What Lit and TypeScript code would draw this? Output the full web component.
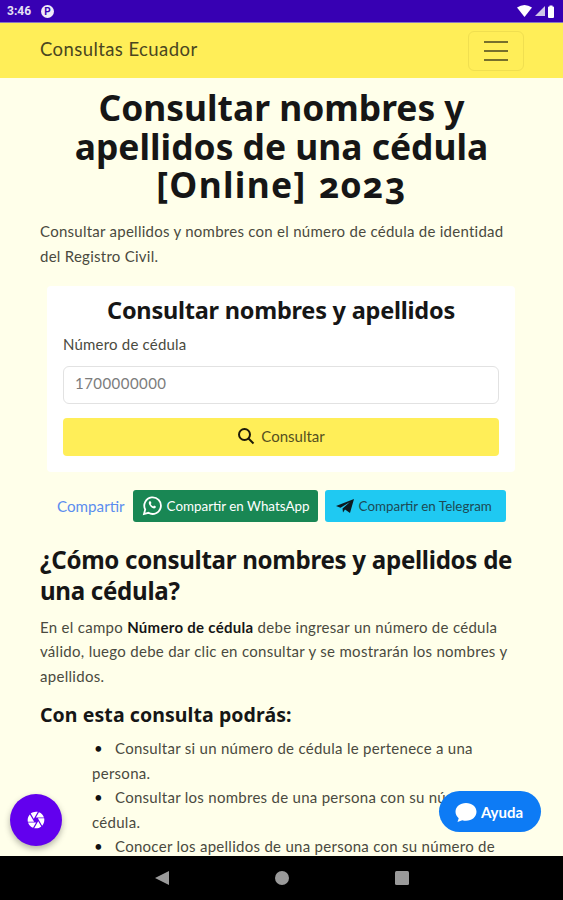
import { LitElement, html, css } from "lit";
import { customElement } from "lit/decorators.js";

@customElement("app-root")
export class AppRoot extends LitElement {
  static styles = css`
    :host { display: block; width: 563px; height: 900px; position: relative; overflow: hidden; background: #ffffea; font-family: "Lato", "Liberation Sans", sans-serif; color: #4a4a40; }
    * { box-sizing: border-box; }
    .page { display: flex; flex-direction: column; height: 900px; }
    .status { height: 22px; background: #3700b3; color: #e6e0f4; display: flex; align-items: center; padding: 0 8px 0 7px; font: 700 12px "Roboto", sans-serif; flex: none; }
    .status .pin { width: 13px; height: 13px; border-radius: 50%; background: #efeaf8; color: #3700b3; font: 700 10px/13px "Roboto", sans-serif; text-align: center; margin-left: 10px; }
    .status .right { margin-left: auto; display: flex; gap: 2px; align-items: center; }
    .nav { height: 56px; border-top: 1px solid #8a78c0; background: #ffee58; display: flex; align-items: center; justify-content: space-between; padding: 0 39px 0 40px; flex: none; }
    .brand { font-size: 18.5px; color: #4a4620; letter-spacing: .42px; margin-top: -4px; }
    .toggler { width: 56px; height: 40px; border: 1px solid #f0df50; border-radius: 6px; display: flex; flex-direction: column; justify-content: center; gap: 7px; align-items: center; }
    .toggler i { display: block; width: 24px; height: 2px; background: #77702c; }
    .main { flex: 1; min-height: 0; overflow: hidden; padding: 10px 40px 0; }
    h1 { margin: 0 -10px; text-align: center; font: 700 35.4px/38.5px "Noto Sans", sans-serif; color: #161616; font-variant-numeric: oldstyle-nums; }
    h1 span { letter-spacing: 1.3px; word-spacing: 2px; }
    .lead { margin: 15px 0 0; font-size: 15px; line-height: 25px; letter-spacing: .26px; }
    .card { margin: 17px 8px 0 7px; background: #fff; border-radius: 4px; padding: 7px 16px 16px; height: 186px; }
    .card h2 { margin: 0; text-align: center; font: 700 23.5px/34px "Noto Sans", sans-serif; color: #161616; letter-spacing: -0.23px; }
    .label { font-size: 15px; line-height: 22px; margin-top: 6px; letter-spacing: .2px; }
    .input { margin-top: 11px; height: 38px; border: 1px solid #e2e2e2; border-radius: 6px; padding: 0 11px 3px; display: flex; align-items: center; font-size: 15px; color: #7c7c7c; background: #fff; letter-spacing: .45px; }
    .btn { margin-top: 14px; height: 38px; background: #ffee58; border-radius: 4px; padding-bottom: 2px; display: flex; align-items: center; justify-content: center; gap: 6px; font-size: 15px; color: #55501f; }
    .share { display: flex; align-items: center; margin: 18px 0 0 17px; height: 32px; }
    .share .t { color: #5b8def; font-size: 15.2px; margin-right: 8px; }
    .sb { height: 32px; border-radius: 3px; display: flex; align-items: center; font-size: 13.4px; }
    .wa { width: 185px; background: #198754; color: #fff; padding-left: 9px; gap: 4px; margin-right: 7px; }
    .tg { width: 181px; background: #1fc9f2; color: #1d4a55; padding-left: 11px; gap: 5px; }
    h3 { margin: 22px 0 0; font: 700 24.1px/31px "Noto Sans", sans-serif; color: #161616; letter-spacing: -0.29px; }
    .para { margin: 9px 0 0; font-size: 15px; line-height: 24.5px; letter-spacing: .29px; }
    .para b { color: #161616; font-weight: 700; }
    h4 { margin: 13px 0 0; font: 700 19.5px/28px "Noto Sans", sans-serif; color: #161616; letter-spacing: .08px; }
    ul { list-style: none; margin: 7px 0 0; padding: 0 0 0 52px; font-size: 15px; line-height: 24.5px; letter-spacing: .28px; }
    li::before { content: "•"; color: #111; display: inline-block; width: 21px; padding-left: 2px; font-size: 15px; line-height: 10px; }
    .bottom { height: 44px; background: #000; flex: none; display: flex; align-items: center; justify-content: center; gap: 104px; }
    .fab { position: absolute; left: 10px; top: 794px; width: 52px; height: 52px; border-radius: 50%; background: #6200ee; box-shadow: 0 3px 6px rgba(0,0,0,.3); display: flex; align-items: center; justify-content: center; }
    .help { position: absolute; left: 439px; top: 791px; width: 102px; height: 41px; border-radius: 21px; background: #0d7bf5; color: #fff; display: flex; align-items: center; justify-content: center; gap: 2px; font: 700 15px "Lato", sans-serif; padding-right: 4px; }
  `;

  render() {
    return html`<div class="page">
      <div class="status">3:46<span class="pin">P</span>
        <span class="right">
          <svg width="15" height="12" viewBox="0 0 15 12"><path d="M0 2.5Q7.5-2.5 15 2.5L7.5 12Z" fill="#fff"/></svg>
          <svg width="11" height="12" viewBox="0 0 11 12"><path d="M11 1V11H1Z" fill="#cfc6e8"/></svg>
          <svg width="8" height="13" viewBox="0 0 8 13"><path d="M1 2.5Q1 1.5 2 1.5H2.5V.5H5.5V1.5H6Q7 1.5 7 2.5V12Q7 13 6 13H2Q1 13 1 12Z" fill="#fff"/></svg>
        </span>
      </div>
      <div class="nav"><span class="brand">Consultas Ecuador</span><span class="toggler"><i></i><i></i><i></i></span></div>
      <div class="main">
        <h1>Consultar nombres y apellidos de una cédula <span>[Online] 2023</span></h1>
        <p class="lead">Consultar apellidos y nombres con el número de cédula de identidad del Registro Civil.</p>
        <div class="card">
          <h2>Consultar nombres y apellidos</h2>
          <div class="label">Número de cédula</div>
          <div class="input">1700000000</div>
          <div class="btn"><svg width="18" height="18" viewBox="0 0 18 18" fill="none" stroke="#1c1a08" stroke-width="2"><circle cx="7.5" cy="7.5" r="5.5"/><path d="M11.5 11.5L16.5 16.5"/></svg>Consultar</div>
        </div>
        <div class="share"><span class="t">Compartir</span>
          <span class="sb wa"><svg width="21" height="21" viewBox="0 0 21 21" fill="none" stroke="#fff" stroke-width="1.8"><path d="M2 19l1.2-4.6A8.3 8.3 0 1 1 6.4 17.8Z"/><path d="M7.4 6.2c-1 1-.8 2.6.6 4.5 1.6 2 3.4 3 4.800 2.600.8-.3 1.200-1 1.100-1.700l-1.800-1-.9.9c-1-.4-2-1.400-2.500-2.500l.8-.9-.9-1.900Z" fill="#fff" stroke="none"/></svg>Compartir en WhatsApp</span>
          <span class="sb tg"><svg width="18" height="16" viewBox="0 0 18 16"><path d="M0 8L18 1L14 15L9 11.500L7 14.500L6.500 10.500L14 4L4.500 9.800Z" fill="#0d1a20"/></svg>Compartir en Telegram</span>
        </div>
        <h3>¿Cómo consultar nombres y apellidos de una cédula?</h3>
        <p class="para">En el campo <b>Número de cédula</b> debe ingresar un número de cédula válido, luego debe dar clic en consultar y se mostrarán los nombres y apellidos.</p>
        <h4>Con esta consulta podrás:</h4>
        <ul>
          <li>Consultar si un número de cédula le pertenece a una persona.</li>
          <li>Consultar los nombres de una persona con su número de cédula.</li>
          <li>Conocer los apellidos de una persona con su número de cédula.</li>
        </ul>
      </div>
      <div class="bottom">
        <svg width="16" height="16" viewBox="0 0 16 16"><path d="M15 1V15L1 8Z" fill="#9a9a9a"/></svg>
        <svg width="16" height="16" viewBox="0 0 16 16"><circle cx="8" cy="8" r="7" fill="#9a9a9a"/></svg>
        <svg width="16" height="16" viewBox="0 0 16 16"><rect x="1" y="1" width="14" height="14" rx="1.500" fill="#9a9a9a"/></svg>
      </div>
    </div>
    <div class="fab"><svg width="20" height="20" viewBox="0 0 24 24" fill="#fff"><path d="M9.400 10.500l4.770-8.260C13.470 2.090 12.750 2 12 2c-2.400 0-4.600.85-6.320 2.260l3.660 6.350.06-.11zM21.540 9c-.92-2.920-3.150-5.260-6-6.340L11.880 9h9.660zm.26 1h-7.490l.29.500 4.760 8.250C21 16.970 22 14.610 22 12c0-.69-.07-1.350-.2-2zM8.540 12l-3.900-6.750C3.010 7.030 2 9.390 2 12c0 .69.070 1.350.2 2h7.490l-1.150-2zm-6.080 3c.92 2.920 3.150 5.260 6 6.340L12.120 15H2.460zm11.270 0l-3.900 6.760c.7.150 1.420.24 2.170.24 2.400 0 4.600-.85 6.320-2.260l-3.660-6.350-.93 1.610z"/></svg></div>
    <div class="help"><svg width="26" height="24" viewBox="0 0 26 24"><path d="M13 3C7 3 2.500 6.800 2.500 11.800c0 2.600 1.200 4.800 3.200 6.400L4.500 22l4.800-1.800c1.200.4 2.400.6 3.700.6 6 0 10.500-4 10.500-9S19 3 13 3Z" fill="#fff"/></svg>Ayuda</div>`;
  }
}
